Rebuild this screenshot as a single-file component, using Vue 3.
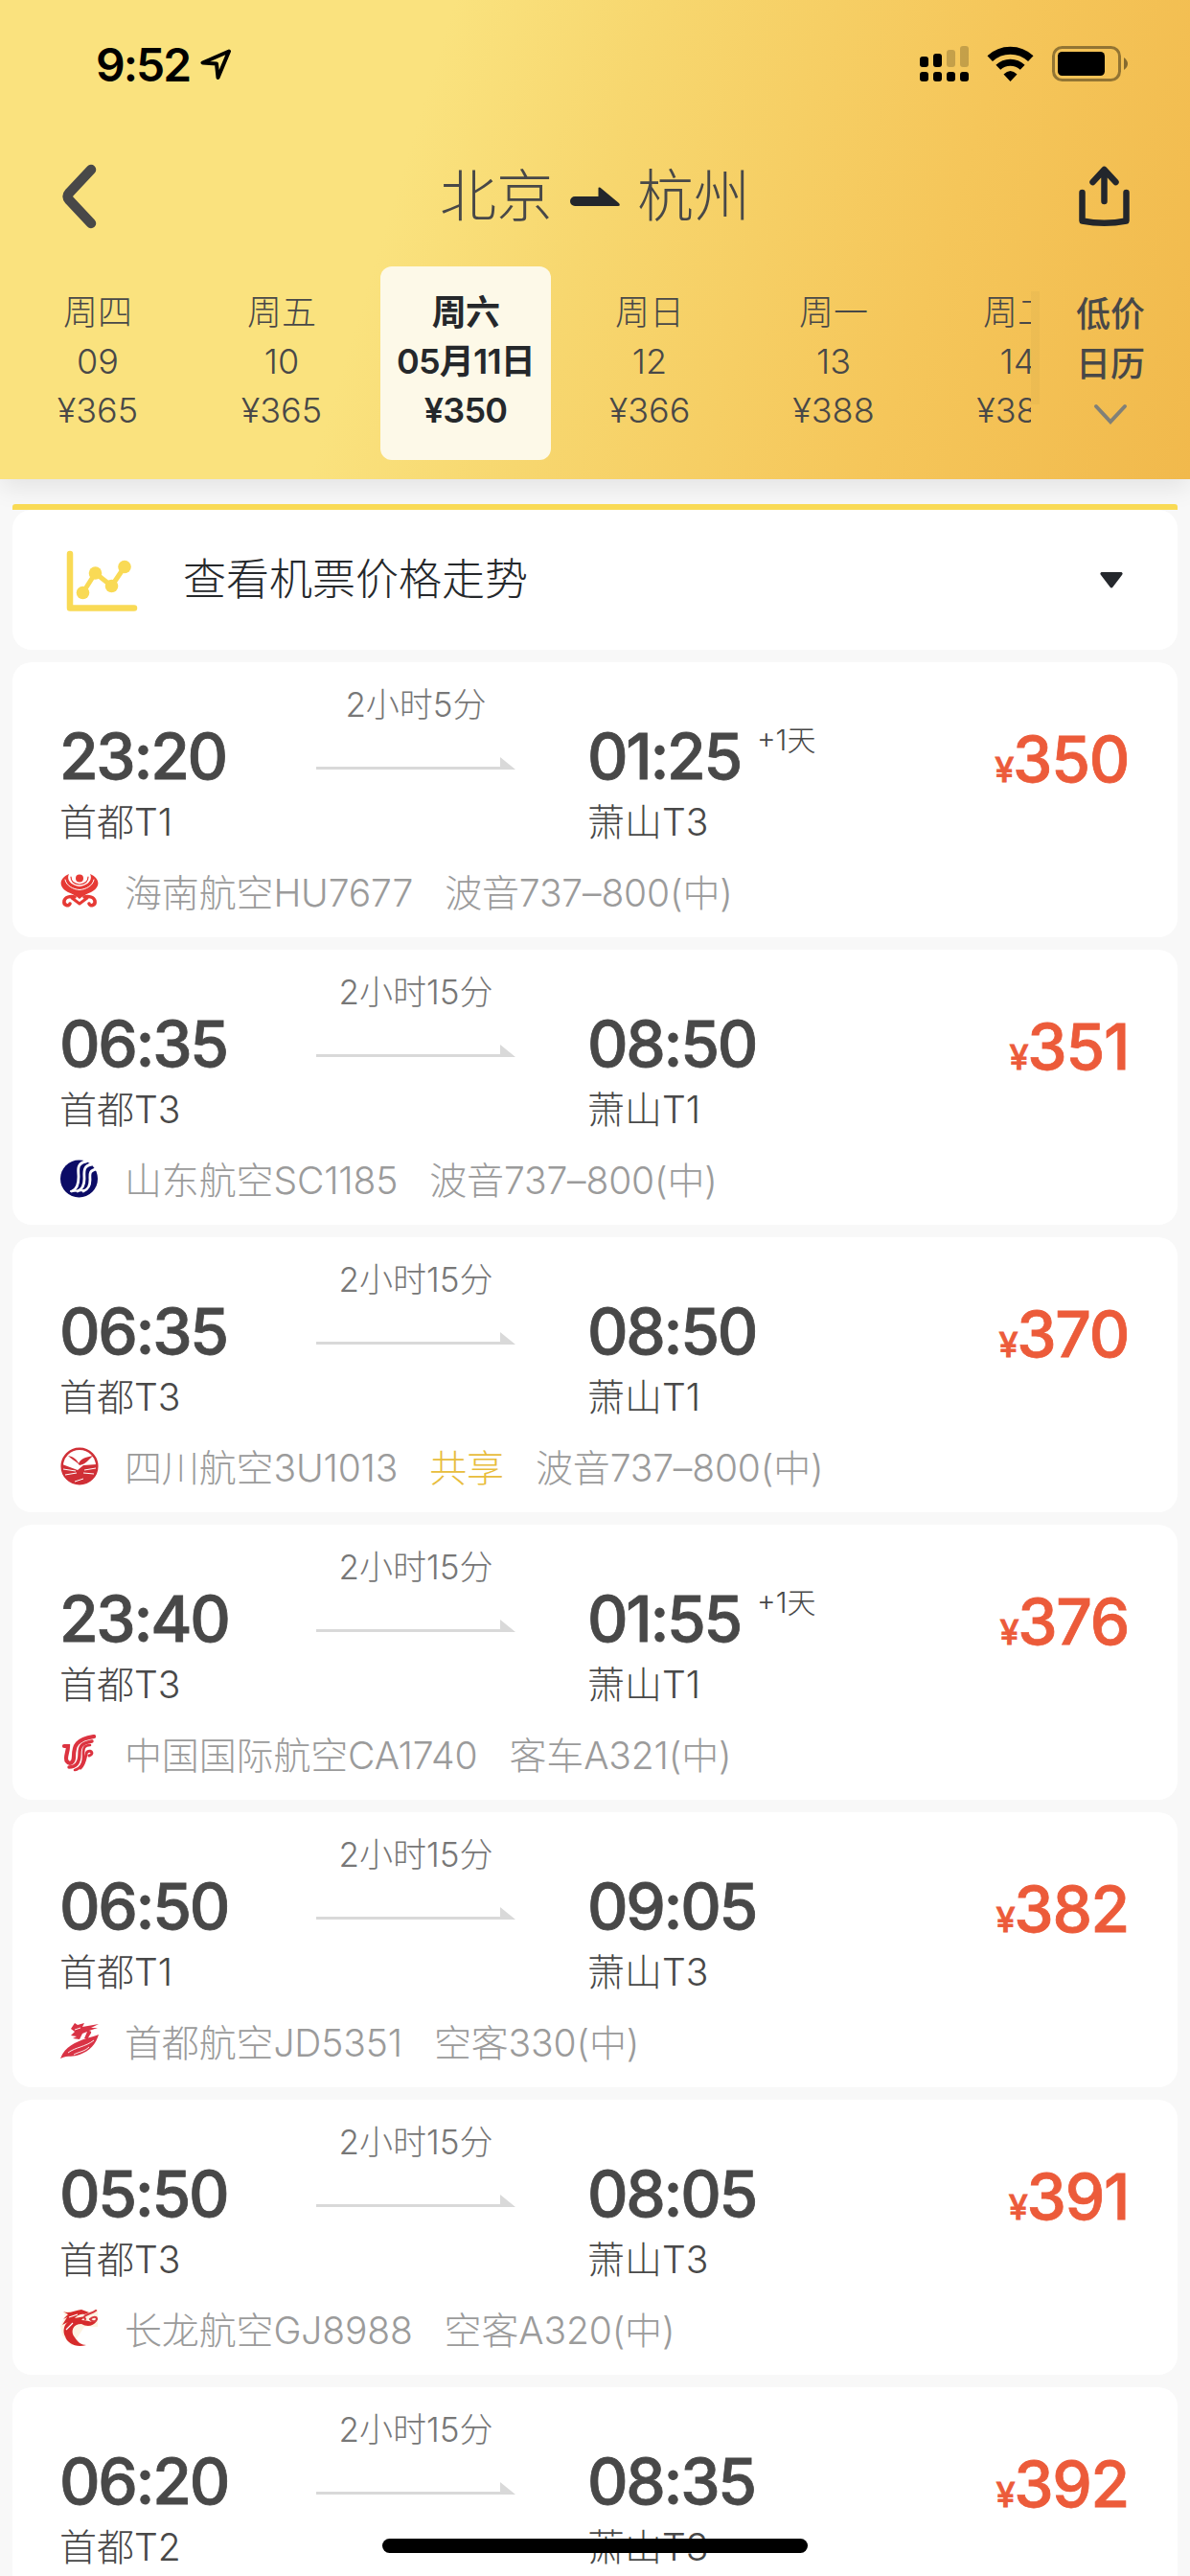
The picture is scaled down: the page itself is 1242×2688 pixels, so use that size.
<template>
  <div class="page">
    <header class="header">
      <div class="status-bar">
        <div class="clock">
          <span>9:52</span>
          <svg class="location" width="34" height="34" viewBox="0 0 34 34">
            <path d="M30 3.500 L2.500 15.500 L17 16.500 L18.500 31 Z" fill="none" stroke="#000" stroke-width="4" stroke-linejoin="round" />
          </svg>
        </div>
        <div class="status-icons">
          <svg width="52" height="38" viewBox="0 0 52 38">
            <rect x="0" y="11" width="9" height="11" rx="3" />
            <rect x="14" y="8" width="9" height="14" rx="3" />
            <rect x="28" y="4" width="9" height="18" rx="3" opacity=".2" />
            <rect x="42" y="0" width="9" height="22" rx="3" opacity=".2" />
            <rect v-for="n in 4" :key="n" :x="(n - 1) * 14" y="27" width="9" height="10" rx="3" />
          </svg>
          <svg width="50" height="38" viewBox="0 0 50 38">
            <path d="M3.200 13.200 A31 31 0 0 1 45.800 13.200" fill="none" stroke="#000" stroke-width="8" />
            <path d="M11.800 22.300 A18.500 18.500 0 0 1 37.200 22.300" fill="none" stroke="#000" stroke-width="7" />
            <path d="M17.500 29.500 Q24.500 22.500 31.500 29.500 L24.500 37 Z" />
          </svg>
          <svg width="80" height="38" viewBox="0 0 80 38">
            <rect x="1.500" y="1.500" width="69" height="34" rx="9" fill="none" stroke="#000" stroke-opacity=".4" stroke-width="3" />
            <rect x="6" y="6" width="49" height="25" rx="4.500" />
            <path d="M75 12 Q79 15 79 18.500 Q79 22 75 25 Z" opacity=".45" />
          </svg>
        </div>
      </div>

      <div class="nav-bar">
        <svg class="back" width="40" height="70" viewBox="0 0 40 70">
          <path d="M33 7 L10.500 31 Q7 35 10.500 39 L33 63" fill="none" stroke="#484848" stroke-width="10.500" stroke-linecap="round" stroke-linejoin="round" />
        </svg>
        <h1 class="route">
          <span>北京</span>
          <svg width="52" height="20" viewBox="0 0 52 20">
            <path d="M5 10 H29.500 V1.500 Q29.500 0 31.500 .8 L51 17 Q53 20 50 20 H5 A5 5 0 0 1 5 10 Z" fill="#23262c" />
          </svg>
          <span>杭州</span>
        </h1>
        <svg class="share" width="56" height="64" viewBox="0 0 56 64">
          <g fill="none" stroke="#23262c" stroke-width="6.500" stroke-linecap="round" stroke-linejoin="round">
            <path d="M27.500 37 V5 M15.500 17 L27.500 4 L39.500 17" />
            <path d="M4.500 28 V57.500 Q27.500 62 50.500 57.500 V28" />
          </g>
        </svg>
      </div>

      <div class="date-bar">
        <div class="dates">
          <div v-for="day in days" :key="day.date" class="date-cell">
            <div class="date-item" :class="{ active: day.active }">
              <span>{{ day.week }}</span>
              <span>{{ day.date }}</span>
              <span>¥{{ day.price }}</span>
            </div>
          </div>
        </div>
        <div class="divider"></div>
        <div class="calendar">
          <span>低价</span>
          <span>日历</span>
          <svg width="36" height="22" viewBox="0 0 36 22">
            <path d="M3 3 L18 19 L33 3" fill="none" stroke="#808078" stroke-width="4" stroke-linecap="round" />
          </svg>
        </div>
      </div>
    </header>

    <main class="list">
      <div class="accent"></div>
      <section class="card trend">
        <svg class="trend-icon" width="76" height="66" viewBox="0 0 76 66">
          <g fill="none" stroke="#f9da55" stroke-linecap="round" stroke-linejoin="round">
            <path d="M4 4 V60.500 H71" stroke-width="6.500" />
            <path d="M17.500 44.500 L30.500 24 L47.500 37.500 L61 17.500" stroke-width="5" />
          </g>
          <g fill="#f9da55">
            <circle cx="17.500" cy="44.500" r="6.800" />
            <circle cx="30.500" cy="24" r="6.800" />
            <circle cx="47.500" cy="37.500" r="6.800" />
            <circle cx="61" cy="17.500" r="6.800" />
          </g>
        </svg>
        <span class="trend-title">查看机票价格走势</span>
        <svg width="24" height="17" viewBox="0 0 24 17">
          <path d="M1.500 0 H22.500 Q24.500 1 23 3 L13.500 15.500 Q12 17.500 10.500 15.500 L1 3 Q-.5 1 1.500 0 Z" fill="#25282d" />
        </svg>
      </section>

      <section v-for="flight in flights" :key="flight.code" class="card flight">
        <div class="schedule">
          <div class="stop">
            <div class="time">{{ flight.depart }}</div>
            <div class="airport">{{ flight.from }}</div>
          </div>
          <div class="duration">
            <span>{{ flight.duration }}</span>
            <svg width="208" height="14" viewBox="0 0 208 14">
              <path d="M0 10 H192 V0 L208 13 H0 Z" fill="#d9d9d9" />
            </svg>
          </div>
          <div class="stop arrive">
            <div class="time">{{ flight.arrive }}<span v-if="flight.nextDay" class="next-day">+1天</span></div>
            <div class="airport">{{ flight.to }}</div>
          </div>
          <div class="price"><span class="yen">¥</span>{{ flight.price }}</div>
        </div>

        <div class="airline">
          <svg class="logo" width="40" height="40" viewBox="0 0 40 40">
            <g v-if="flight.logo === 'hainan'" fill="none" stroke="#e63a35" stroke-linecap="round">
              <path d="M9 2 C-3 7 -1 17 8 21 C13 23 17 25 20 28 C23 25 27 23 32 21 C41 17 43 7 31 2 C34 8 29 14 20 15 C11 14 6 8 9 2 Z" fill="#e63a35" stroke="none" />
              <path d="M5 8 C6 14 13 18 20 18.500 C27 18 34 14 35 8" stroke="#fff" stroke-width="1" />
              <path d="M11 5 C11 10 15 12.500 20 13 C25 12.500 29 10 29 5" stroke-width="1.200" />
              <circle cx="20" cy="6.500" r="4" fill="#e63a35" stroke="none" />
              <path d="M15 26 C10 25 5 26 4 30 C3 35 9 36 10 33 M25 26 C30 25 35 26 36 30 C37 35 31 36 30 33" stroke-width="3.600" />
              <path d="M12 27 L20 33 L28 27" stroke-width="3" stroke-linejoin="round" />
            </g>
            <g v-else-if="flight.logo === 'shandong'">
              <circle cx="19.500" cy="20" r="19.500" fill="#0c0c66" />
              <g fill="none" stroke="#fff" stroke-linecap="round">
                <path d="M27 2 C16 4 19 12 19 18 C19 25 18 31 12 33" stroke-width="2.800" />
                <path d="M33 5 C23 6 25 14 25 20 C25 27 23 31 18 33" stroke-width="2.800" />
                <path d="M38 10 C29 11 31 17 31 21 C31 28 29 31 24 33" stroke-width="2.800" />
                <path d="M11 33 L26 32" stroke-width="2" />
              </g>
            </g>
            <g v-else-if="flight.logo === 'sichuan'">
              <circle cx="20" cy="20" r="18.300" fill="#fff" stroke="#d02f36" stroke-width="2.500" />
              <path d="M2 18 L18 24 L24 19 L38 18 C39 28 32 38 20 38 C8 38 1 28 2 18 Z" fill="#d02f36" />
              <path d="M8 9 C14 10 18 14 19 17 C23 10 28 11 34 9 C29 14 26 18 20 19 C17 15 13 14 8 9 Z" fill="#d02f36" />
              <path d="M3 23 L16 25 M5 29 L17 27 M25 24 L37 22 M24 27 L35 28 M15 36 L24 33" stroke="#fff" stroke-width="1" />
            </g>
            <g v-else-if="flight.logo === 'airchina'" fill="none" stroke="#dc3340" stroke-linecap="round">
              <path d="M4 12 H8 C8 19 4 25 7 28 C10 32 14 29 14 23 C14 11 17 5 35 2" stroke-width="4.200" />
              <path d="M33 7 C22 9 20 12 20 20 C20 29 17 34 9 34" stroke-width="3.400" />
              <path d="M31 11 C25 11 24 14 24 20 C25 31 20 36 15 37" stroke-width="2.600" />
              <path d="M30 22 C35 21 33 15 28 18 C26 20 27 29 21 35" stroke-width="3" />
            </g>
            <g v-else-if="flight.logo === 'capital'">
              <path d="M0 38 C5 25 16 21 27 17 C32 16 37 14 40 13 C37 23 31 30 20 34 C13 37 9 34 0 38 Z" fill="#d93345" />
              <path d="M11 7 L15 1 L18 3 L25 1 L23 5 L40 2 L32 6 L39 6 L30 9 C35 10 30 13 29 17 L25 17 L28 10 L23 12 L20 18 L13 17 L17 15 L11 14 L15 10 Z" fill="#d93345" />
              <path d="M8 32 C16 26 26 26 35 19 M14 34 C19 31 25 31 30 26 M15 8 L21 6" fill="none" stroke="#fff" stroke-width=".9" />
            </g>
            <g v-else-if="flight.logo === 'loong'">
              <path d="M3 2 H14 L20 0 L30 2 L39 0 V18 L25 18 L12 38 L2 27 L0 17 L5 7 Z" fill="#fdf3e2" />
              <path d="M3 2 C8 5 15 1 22 0 L30 3 L25 5 C20 4 17 7 15 9 L26 7 L22 11 C28 11 33 14 38 12 C34 18 27 18 22 15 C13 15 10 23 15 29 C18 34 22 37 27 37 C16 40 7 35 5 28 C2 23 4 15 8 13 L2 16 L7 8 L3 10 L8 5 Z" fill="#d62b2b" />
              <path d="M26 10 C22 5 32 5 37 1 M31 10 C34 7 38 7 38 10 C37 13 33 13 31 10" fill="none" stroke="#d83a40" stroke-width="2.200" stroke-linecap="round" />
              <path d="M9 8 L18 5 M6 21 L13 14" stroke="#fff" stroke-width="1.200" />
            </g>
          </svg>
          <span>{{ flight.airline }}{{ flight.code }}</span>
          <span v-if="flight.shared" class="shared">共享</span>
          <span>{{ flight.plane }}</span>
        </div>
      </section>
    </main>

    <div class="home-indicator"></div>
  </div>
</template>

<script setup>
import { ref } from 'vue';

const days = ref([
  { week: '周四', date: '09', price: 365 },
  { week: '周五', date: '10', price: 365 },
  { week: '周六', date: '05月11日', price: 350, active: true },
  { week: '周日', date: '12', price: 366 },
  { week: '周一', date: '13', price: 388 },
  { week: '周二', date: '14', price: 388 }
]);

const flights = ref([
  { depart: '23:20', from: '首都T1', arrive: '01:25', to: '萧山T3', nextDay: true, duration: '2小时5分', price: 350, logo: 'hainan', airline: '海南航空', code: 'HU7677', plane: '波音737–800(中)' },
  { depart: '06:35', from: '首都T3', arrive: '08:50', to: '萧山T1', duration: '2小时15分', price: 351, logo: 'shandong', airline: '山东航空', code: 'SC1185', plane: '波音737–800(中)' },
  { depart: '06:35', from: '首都T3', arrive: '08:50', to: '萧山T1', duration: '2小时15分', price: 370, logo: 'sichuan', airline: '四川航空', code: '3U1013', shared: true, plane: '波音737–800(中)' },
  { depart: '23:40', from: '首都T3', arrive: '01:55', to: '萧山T1', nextDay: true, duration: '2小时15分', price: 376, logo: 'airchina', airline: '中国国际航空', code: 'CA1740', plane: '客车A321(中)' },
  { depart: '06:50', from: '首都T1', arrive: '09:05', to: '萧山T3', duration: '2小时15分', price: 382, logo: 'capital', airline: '首都航空', code: 'JD5351', plane: '空客330(中)' },
  { depart: '05:50', from: '首都T3', arrive: '08:05', to: '萧山T3', duration: '2小时15分', price: 391, logo: 'loong', airline: '长龙航空', code: 'GJ8988', plane: '空客A320(中)' },
  { depart: '06:20', from: '首都T2', arrive: '08:35', to: '萧山T3', duration: '2小时15分', price: 392, logo: '', airline: '', code: '', plane: '' }
]);
</script>

<style>
body {
  background: #f8f8f8;
}
</style>

<style scoped>
.page {
  position: relative;
  width: 1242px;
  height: 2688px;
  overflow: hidden;
  background: #f8f8f8;
  color: #484848;
  font-family: Inter, 'Noto Sans CJK SC', sans-serif;
  font-weight: 300;
}

.page svg {
  display: block;
  flex-shrink: 0;
}

.header {
  height: 500px;
  background: linear-gradient(107deg, #fae27e 0%, #fae27e 34%, #f7d76f 49%, #f5c65a 76%, #f1b94c 100%);
  box-shadow: 0 8px 26px rgba(0, 0, 0, 0.09);
}

.status-bar {
  display: flex;
  justify-content: space-between;
  height: 132px;
  padding: 0 64px 0 100px;
  box-sizing: border-box;
}

.clock {
  display: flex;
  height: 60px;
  margin-top: 38px;
  line-height: 60px;
  color: #000;
  font-size: 48px;
  font-weight: 600;
  letter-spacing: -2px;
}

.location {
  margin: 12px 0 0 11px;
}

.status-icons {
  display: flex;
  gap: 18px;
  margin-top: 48px;
}

.nav-bar {
  display: flex;
  align-items: center;
  justify-content: space-between;
  height: 146px;
  padding: 0 61px 0 62px;
  box-sizing: border-box;
}

.route {
  display: flex;
  align-items: center;
  gap: 18px;
  margin: 0 0 0 15px;
  line-height: 80px;
  font-size: 59px;
  font-weight: 300;
}

.date-bar {
  display: flex;
}

.dates {
  display: flex;
  width: 1070px;
  padding-left: 6px;
  overflow: hidden;
}

.date-cell {
  display: flex;
  flex: 0 0 192px;
  justify-content: center;
}

.date-item {
  display: flex;
  flex-direction: column;
  align-items: center;
  width: 178px;
  height: 202px;
  padding-top: 23px;
  box-sizing: border-box;
  border-radius: 12px;
  line-height: 51px;
  font-size: 36px;
  white-space: nowrap;
}

.date-item.active {
  background: #fdf9e8;
  color: #25282b;
  font-weight: 600;
  letter-spacing: -0.8px;
}

.divider {
  width: 9px;
  height: 118px;
  margin-top: 26px;
  background: rgba(120, 90, 60, 0.05);
}

.calendar {
  display: flex;
  flex-direction: column;
  align-items: center;
  width: 148px;
  padding-top: 24px;
  line-height: 52px;
  font-size: 36px;
  font-weight: 500;
}

.calendar svg {
  margin-top: 15px;
}

.list {
  padding: 26px 13px 0;
}

.accent {
  height: 6px;
  border-radius: 3px 3px 0 0;
  background: #f9da55;
}

.card {
  margin-bottom: 13px;
  border-radius: 20px;
  background: #fff;
  box-sizing: border-box;
}

.trend {
  display: flex;
  align-items: center;
  height: 146px;
  padding: 0 57px 0 56px;
}

.trend-icon {
  margin-top: 3px;
}

.trend-title {
  flex: 1;
  margin: -8px 0 0 46px;
  color: #25282b;
  font-size: 45px;
}

.flight {
  height: 287px;
  padding: 0 51px 0 49px;
}

.schedule {
  display: flex;
  height: 206px;
}

.stop {
  width: 268px;
  padding-top: 57px;
}

.time {
  height: 82px;
  line-height: 82px;
  font-size: 66px;
  font-weight: 500;
  letter-spacing: -2.3px;
  white-space: nowrap;
  -webkit-text-stroke: 0.8px currentColor;
}

.next-day {
  margin-left: 17px;
  font-size: 30px;
  font-weight: 300;
  letter-spacing: 0;
  vertical-align: 30px;
  line-height: 1;
  -webkit-text-stroke: 0;
}

.airport {
  height: 56px;
  line-height: 56px;
  font-size: 39px;
}

.duration {
  display: flex;
  flex-direction: column;
  align-items: center;
  width: 208px;
  line-height: 50px;
  padding-top: 19px;
  color: #777;
  font-size: 35px;
}

.duration svg {
  margin-top: 30px;
}

.arrive {
  flex: 1;
  padding-left: 75px;
}

.price {
  padding-top: 61px;
  height: 80px;
  line-height: 80px;
  color: #ec5b3a;
  font-size: 66px;
  font-weight: 500;
  letter-spacing: -1.3px;
  -webkit-text-stroke: 0.8px currentColor;
}

.yen {
  font-size: 36px;
}

.airline {
  display: flex;
  align-items: center;
  gap: 33px;
  height: 64px;
  color: #9b9b9b;
  font-size: 39px;
  letter-spacing: -0.15px;
  white-space: nowrap;
}

.logo {
  margin: 2px -6px 0 1px;
}

.shared {
  color: #e8bd3c;
}

.home-indicator {
  position: absolute;
  left: 399px;
  top: 2649px;
  width: 444px;
  height: 15px;
  border-radius: 8px;
  background: #000;
}
</style>
